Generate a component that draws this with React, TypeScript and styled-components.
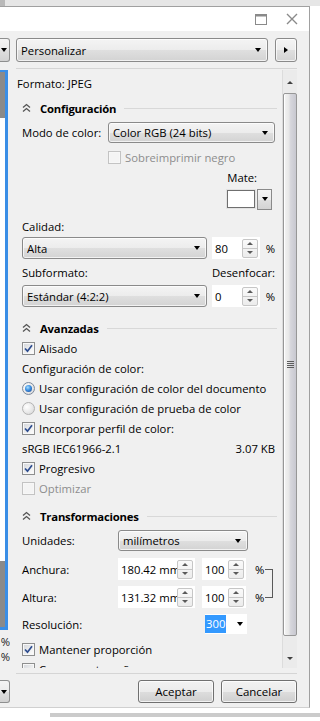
import React from "react";
import styled, { createGlobalStyle } from "styled-components";

const GlobalStyle = createGlobalStyle`
  html, body { margin: 0; padding: 0; background: #ffffff; }
  body {
    font-family: "Open Sans", "Noto Sans", "Liberation Sans", sans-serif;
    font-size: 11.3px;
    color: #000;
  }
  #root { width: 320px; height: 721px; overflow: hidden; }
  * { box-sizing: border-box; }
`;

const Screen = styled.div`
  width: 320px;
  height: 721px;
  overflow: hidden;
  display: flex;
  flex-direction: column;
  background: #fff;
`;

const TopStrip = styled.div`
  height: 6px;
  flex: none;
  background: #e6e6e6;
  display: flex;
`;

const TopCorner = styled.div`
  width: 5px;
  height: 6px;
  background: #b9b9b9;
`;

const Window = styled.div`
  width: 310px;
  height: 702px;
  flex: none;
  border-top: 1px solid #a0a0a0;
  border-right: 1px solid #a0a0a0;
  border-bottom: 1px solid #d0d0d0;
  background: #f0f0f0;
  display: flex;
  flex-direction: column;
`;

const BottomBar = styled.div`
  margin: 5px 0 0 50px;
  height: 4px;
  background: #cbcbcb;
`;

const TitleBar = styled.div`
  height: 24px;
  flex: none;
  background: #ffffff;
  display: flex;
  align-items: center;
  justify-content: flex-end;
  gap: 19px;
  padding-right: 11px;
`;

const Body = styled.div`
  flex: 1;
  min-height: 0;
  display: grid;
  grid-template-columns: 10px 1fr;
  column-gap: 6px;
  padding-right: 12px;
`;

/* ---------- left (cut) preview pane ---------- */
const LeftPane = styled.div`
  display: flex;
  flex-direction: column;
  padding-top: 7px;
  overflow: hidden;
`;

const Stub = styled.div<{ $h: number; $mt?: number }>`
  width: 10px;
  height: ${(p) => p.$h}px;
  margin-top: ${(p) => p.$mt ?? 0}px;
  border: 1px solid #8e8f8f;
  border-left: none;
  border-radius: 0 3px 3px 0;
  background: linear-gradient(#f4f4f4 0%, #ebebeb 50%, #dedede 51%, #d2d2d2 100%);
  display: flex;
  align-items: center;
  padding-left: 1px;
`;

const Preview = styled.div`
  width: 8px;
  height: 560px;
  margin-top: 8px;
  border-top: 2px solid #3a8ee6;
  border-right: 3px solid #3a8ee6;
  border-bottom: 3px solid #3a8ee6;
  display: flex;
  flex-direction: column;
  background: #ffffff;
`;

const PreviewShade = styled.div<{ $h: number }>`
  height: ${(p) => p.$h}px;
  background: #8a8a8a;
  flex: none;
`;

const PreviewFill = styled.div`
  flex: 1;
`;

const CutPercent = styled.div`
  margin-top: 4px;
  width: 10px;
  line-height: 15px;
  direction: rtl;
  overflow: hidden;
  white-space: nowrap;
  color: #222;
`;

/* ---------- main column ---------- */
const Main = styled.div`
  display: flex;
  flex-direction: column;
  min-width: 0;
`;

const Toolbar = styled.div`
  padding-top: 7px;
  display: flex;
  gap: 7px;
  height: 31px;
  flex: none;
`;

const Separator = styled.div<{ $mt: number }>`
  margin-top: ${(p) => p.$mt}px;
  height: 1px;
  flex: none;
  background: #d5d5d5;
`;

const Panel = styled.div`
  margin-top: 1px;
  height: 598px;
  flex: none;
  display: flex;
`;

const Content = styled.div`
  flex: 1;
  min-width: 0;
  overflow: hidden;
  display: flex;
  flex-direction: column;
  padding-right: 7px;
`;

const ButtonRow = styled.div`
  margin-top: 6px;
  display: flex;
  justify-content: flex-end;
  gap: 7px;
`;

const PushButton = styled.div`
  width: 76px;
  height: 23px;
  border: 1px solid #707070;
  border-radius: 3px;
  background: linear-gradient(#f2f2f2 0%, #ebebeb 50%, #dddddd 51%, #cfcfcf 100%);
  box-shadow: inset 0 0 0 1px rgba(255, 255, 255, 0.75);
  display: flex;
  align-items: center;
  justify-content: center;
  font-size: 11.5px;
`;

/* ---------- scrollbar ---------- */
const Scrollbar = styled.div`
  width: 15px;
  flex: none;
  padding-top: 2px;
  display: flex;
  flex-direction: column;
  background: #ebebeb;
  border-left: 1px solid #dcdcdc;
`;

const ScrollBtn = styled.div<{ $h: number }>`
  height: ${(p) => p.$h}px;
  flex: none;
  display: flex;
  align-items: center;
  justify-content: center;
`;

const ScrollTrack = styled.div`
  flex: 1;
  display: flex;
  flex-direction: column;
`;

const Thumb = styled.div`
  height: 543px;
  border: 1px solid #979797;
  border-radius: 2px;
  background: linear-gradient(to right, #f4f4f4 0%, #e8e8e8 40%, #d6d6dc 55%, #c8c8d0 100%);
  box-shadow: inset 1px 0 0 #ffffff;
  display: flex;
  align-items: center;
  justify-content: center;
`;

const Grip = styled.div`
  width: 7px;
  height: 7px;
  background: repeating-linear-gradient(#5d5d5d 0 1px, transparent 1px 2px);
`;

/* ---------- rows ---------- */
const FormatRow = styled.div`
  height: 28px;
  line-height: 28px;
  padding-left: 1px;
  flex: none;
`;

const SectionHeader = styled.div<{ $mt?: number }>`
  margin-top: ${(p) => p.$mt ?? 0}px;
  height: 20px;
  flex: none;
  display: flex;
  align-items: center;
  padding-left: 6px;
`;

const HeaderText = styled.span`
  margin-left: 9px;
  font-weight: 700;
  letter-spacing: -0.2px;
`;

const HeaderLine = styled.span`
  flex: 1;
  height: 1px;
  margin: 0 -2px 0 8px;
  background: #d8d8d8;
`;

const Row = styled.div<{ $mt?: number; $h?: number; $indent?: number; $justify?: string }>`
  margin-top: ${(p) => p.$mt ?? 0}px;
  height: ${(p) => p.$h ?? 20}px;
  flex: none;
  display: flex;
  align-items: center;
  justify-content: ${(p) => p.$justify ?? "flex-start"};
  padding-left: ${(p) => p.$indent ?? 6}px;
  white-space: nowrap;
`;

const Label = styled.span<{ $w?: number; $muted?: boolean; $mr?: number }>`
  width: ${(p) => (p.$w ? `${p.$w}px` : "auto")};
  margin-right: ${(p) => p.$mr ?? 0}px;
  flex: none;
  color: ${(p) => (p.$muted ? "#8d8d8d" : "#000")};
`;

const Spacer = styled.span<{ $w?: number }>`
  ${(p) => (p.$w ? `flex: none; width: ${p.$w}px;` : "flex: 1;")}
`;

const Combo = styled.div<{ $w?: number; $h?: number }>`
  ${(p) => (p.$w ? `width: ${p.$w}px; flex: none;` : "flex: 1;")}
  height: ${(p) => p.$h ?? 21}px;
  border: 1px solid #8a8a8a;
  border-radius: 3px;
  background: linear-gradient(#f4f4f4 0%, #ececec 50%, #dfdfdf 51%, #d3d3d3 100%);
  box-shadow: inset 0 0 0 1px rgba(255, 255, 255, 0.7);
  display: flex;
  align-items: center;
  padding: 0 6px 0 4px;
  min-width: 0;
`;

const ComboText = styled.span`
  flex: 1;
  overflow: hidden;
  white-space: nowrap;
`;

const DownArrow = styled.span`
  width: 0;
  height: 0;
  flex: none;
  border-left: 3.5px solid transparent;
  border-right: 3.5px solid transparent;
  border-top: 4px solid #000;
`;

const RightArrow = styled.span`
  width: 0;
  height: 0;
  border-top: 3.5px solid transparent;
  border-bottom: 3.5px solid transparent;
  border-left: 4px solid #000;
`;

const SmallArrow = styled.span<{ $up?: boolean; $color?: string }>`
  width: 0;
  height: 0;
  border-left: 3px solid transparent;
  border-right: 3px solid transparent;
  ${(p) =>
    p.$up
      ? `border-bottom: 3px solid ${p.$color ?? "#5a5a5a"};`
      : `border-top: 3px solid ${p.$color ?? "#5a5a5a"};`}
`;

const ArrowButton = styled.div`
  width: 22px;
  height: 24px;
  flex: none;
  border: 1px solid #8a8a8a;
  border-radius: 3px;
  background: linear-gradient(#f4f4f4 0%, #ececec 50%, #dfdfdf 51%, #d3d3d3 100%);
  box-shadow: inset 0 0 0 1px rgba(255, 255, 255, 0.7);
  display: flex;
  align-items: center;
  justify-content: center;
`;

const SpinBox = styled.div<{ $w: number }>`
  width: ${(p) => p.$w}px;
  height: 22px;
  flex: none;
  background: #ffffff;
  display: flex;
  align-items: center;
  padding-right: 2px;
`;

const SpinText = styled.span`
  flex: 1;
  min-width: 0;
  padding-left: 3px;
  overflow: hidden;
  white-space: nowrap;
`;

const SpinButtons = styled.span`
  width: 16px;
  height: 19px;
  flex: none;
  border: 1px solid #c6c6c6;
  border-radius: 2px;
  background: linear-gradient(#fafafa, #ececec);
  display: flex;
  flex-direction: column;
`;

const SpinHalf = styled.span`
  flex: 1;
  display: flex;
  align-items: center;
  justify-content: center;
  & + & {
    border-top: 1px solid #c6c6c6;
  }
`;

const Pct = styled.span`
  flex: 1;
  text-align: right;
`;

const Swatch = styled.div`
  display: flex;
  align-items: center;
  gap: 2px;
  margin-right: 3px;
`;

const SwatchColor = styled.div`
  width: 28px;
  height: 18px;
  background: #ffffff;
  border: 1px solid #6f6f6f;
  box-shadow: 0 0 0 1px #e2e2e2;
`;

const SwatchButton = styled.div`
  width: 15px;
  height: 21px;
  border: 1px solid #8a8a8a;
  background: linear-gradient(#f4f4f4 0%, #ececec 50%, #dfdfdf 51%, #d3d3d3 100%);
  display: flex;
  align-items: center;
  justify-content: center;
`;

const CheckBox = styled.span<{ $disabled?: boolean }>`
  width: 13px;
  height: 13px;
  flex: none;
  margin-right: 4px;
  border: 1px solid ${(p) => (p.$disabled ? "#c3c3c3" : "#8e8f8f")};
  background: ${(p) =>
    p.$disabled ? "#f4f4f4" : "linear-gradient(135deg, #d2d5da 0%, #f4f4f4 70%, #ffffff 100%)"};
  box-shadow: inset 0 0 0 1px ${(p) => (p.$disabled ? "#f7f7f7" : "#f8f8f8")};
  display: flex;
  align-items: center;
  justify-content: center;
`;

const RadioCircle = styled.span<{ $on?: boolean }>`
  width: 13px;
  height: 13px;
  flex: none;
  margin-right: 4px;
  border-radius: 50%;
  border: 1px solid ${(p) => (p.$on ? "#7d8a9c" : "#b3b3b3")};
  background: radial-gradient(circle at 35% 35%, #ffffff 0%, #e6e6e6 60%, #d0d0d0 100%);
  display: flex;
  align-items: center;
  justify-content: center;
  &::after {
    content: "";
    width: 7px;
    height: 7px;
    border-radius: 50%;
    background: ${(p) =>
      p.$on ? "radial-gradient(circle at 40% 35%, #a8e0ff 0%, #3b8ee0 45%, #173f8c 100%)" : "transparent"};
  }
`;

const TransformGrid = styled.div`
  margin-top: 7px;
  flex: none;
  display: grid;
  grid-template-columns: 96px 84px 53px 10px 8px;
  grid-template-rows: 22px 22px;
  row-gap: 6px;
  padding-left: 6px;
  align-items: center;
`;

const Bracket = styled.div`
  grid-column: 5;
  grid-row: 1 / 3;
  align-self: stretch;
  margin: 11px 0 10px 0;
  border: 1px solid #5a5a5a;
  border-left: none;
`;

const EditCombo = styled.div`
  width: 42px;
  height: 20px;
  flex: none;
  background: #ffffff;
  display: flex;
  align-items: center;
  padding-right: 4px;
`;

const Selected = styled.span`
  background: #3399ff;
  color: #ffffff;
  height: 18px;
  line-height: 18px;
  padding: 0 1px;
  margin-right: auto;
`;

/* ---------- icons ---------- */
const MaxIcon = () => (
  <svg width="12" height="11" viewBox="0 0 12 11">
    <rect x="0.5" y="0.5" width="11" height="10" fill="none" stroke="#8a8a8a" strokeWidth="1" />
    <rect x="0.5" y="0.5" width="11" height="2" fill="#8a8a8a" />
  </svg>
);

const CloseIcon = () => (
  <svg width="12" height="12" viewBox="0 0 12 12">
    <path d="M1 1 L11 11 M11 1 L1 11" stroke="#8a8a8a" strokeWidth="1.4" fill="none" />
  </svg>
);

const Chevrons = () => (
  <svg width="9" height="10" viewBox="0 0 9 10">
    <path d="M1 4.5 L4.5 1.5 L8 4.5 M1 8.5 L4.5 5.5 L8 8.5" stroke="#555" strokeWidth="1.3" fill="none" />
  </svg>
);

const Tick = () => (
  <svg width="9" height="9" viewBox="0 0 9 9">
    <path d="M1 4.5 L3.5 7.2 L8 1.2" stroke="#2e4d8f" strokeWidth="1.7" fill="none" />
  </svg>
);

const Check = ({ on, disabled, children }: { on?: boolean; disabled?: boolean; children: React.ReactNode }) => (
  <>
    <CheckBox $disabled={disabled}>{on && <Tick />}</CheckBox>
    <Label $muted={disabled}>{children}</Label>
  </>
);

const Spin = ({ w, value }: { w: number; value: string }) => (
  <SpinBox $w={w}>
    <SpinText>{value}</SpinText>
    <SpinButtons>
      <SpinHalf>
        <SmallArrow $up />
      </SpinHalf>
      <SpinHalf>
        <SmallArrow />
      </SpinHalf>
    </SpinButtons>
  </SpinBox>
);

export default function App() {
  return (
    <>
      <GlobalStyle />
      <Screen>
        <TopStrip>
          <TopCorner />
        </TopStrip>
        <Window>
          <TitleBar>
            <MaxIcon />
            <CloseIcon />
          </TitleBar>
          <Body>
            <LeftPane>
              <Stub $h={24}>
                <DownArrow />
              </Stub>
              <Preview>
                <PreviewShade $h={46} />
                <PreviewFill />
                <PreviewShade $h={66} />
              </Preview>
              <CutPercent>
                %<br />%
              </CutPercent>
              <Stub $h={23} $mt={16}>
                <DownArrow />
              </Stub>
            </LeftPane>

            <Main>
              <Toolbar>
                <Combo $h={24}>
                  <ComboText>Personalizar</ComboText>
                  <DownArrow />
                </Combo>
                <ArrowButton>
                  <RightArrow />
                </ArrowButton>
              </Toolbar>
              <Separator $mt={6} />
              <Panel>
                <Content>
                  <FormatRow>Formato: JPEG</FormatRow>

                  <SectionHeader>
                    <Chevrons />
                    <HeaderText>Configuración</HeaderText>
                    <HeaderLine />
                  </SectionHeader>
                  <Row $mt={4} $h={21}>
                    <Label $w={86}>Modo de color:</Label>
                    <Combo>
                      <ComboText>Color RGB (24 bits)</ComboText>
                      <DownArrow />
                    </Combo>
                  </Row>
                  <Row $mt={4} $indent={92}>
                    <Check disabled>Sobreimprimir negro</Check>
                  </Row>
                  <Row $justify="flex-end">
                    <Label $mr={18}>Mate:</Label>
                  </Row>
                  <Row $mt={1} $h={22} $justify="flex-end">
                    <Swatch>
                      <SwatchColor />
                      <SwatchButton>
                        <DownArrow />
                      </SwatchButton>
                    </Swatch>
                  </Row>
                  <Row $mt={6}>
                    <Label>Calidad:</Label>
                  </Row>
                  <Row $mt={1} $h={22}>
                    <Combo $w={185} $h={22}>
                      <ComboText>Alta</ComboText>
                      <DownArrow />
                    </Combo>
                    <Spacer $w={5} />
                    <Spin w={48} value="80" />
                    <Pct>%</Pct>
                  </Row>
                  <Row $mt={3}>
                    <Label>Subformato:</Label>
                    <Spacer />
                    <Label>Desenfocar:</Label>
                  </Row>
                  <Row $mt={3} $h={22}>
                    <Combo $w={185} $h={22}>
                      <ComboText>Estándar (4:2:2)</ComboText>
                      <DownArrow />
                    </Combo>
                    <Spacer $w={5} />
                    <Spin w={48} value="0" />
                    <Pct>%</Pct>
                  </Row>

                  <SectionHeader $mt={11}>
                    <Chevrons />
                    <HeaderText>Avanzadas</HeaderText>
                    <HeaderLine />
                  </SectionHeader>
                  <Row>
                    <Check on>Alisado</Check>
                  </Row>
                  <Row>
                    <Label>Configuración de color:</Label>
                  </Row>
                  <Row>
                    <RadioCircle $on />
                    <Label>Usar configuración de color del documento</Label>
                  </Row>
                  <Row>
                    <RadioCircle />
                    <Label>Usar configuración de prueba de color</Label>
                  </Row>
                  <Row>
                    <Check on>Incorporar perfil de color:</Check>
                  </Row>
                  <Row>
                    <Label>sRGB IEC61966-2.1</Label>
                    <Spacer />
                    <Label>3.07 KB</Label>
                  </Row>
                  <Row>
                    <Check on>Progresivo</Check>
                  </Row>
                  <Row>
                    <Check disabled>Optimizar</Check>
                  </Row>

                  <SectionHeader $mt={8}>
                    <Chevrons />
                    <HeaderText>Transformaciones</HeaderText>
                    <HeaderLine />
                  </SectionHeader>
                  <Row $mt={4} $h={21}>
                    <Label $w={96}>Unidades:</Label>
                    <Combo $w={130}>
                      <ComboText>milímetros</ComboText>
                      <DownArrow />
                    </Combo>
                  </Row>
                  <TransformGrid>
                    <Label>Anchura:</Label>
                    <Spin w={77} value="180.42 mm" />
                    <Spin w={44} value="100" />
                    <Label>%</Label>
                    <Bracket />
                    <Label>Altura:</Label>
                    <Spin w={77} value="131.32 mm" />
                    <Spin w={44} value="100" />
                    <Label>%</Label>
                  </TransformGrid>
                  <Row $mt={6}>
                    <Label $w={183}>Resolución:</Label>
                    <EditCombo>
                      <Selected>300</Selected>
                      <DownArrow />
                    </EditCombo>
                  </Row>
                  <Row $mt={5}>
                    <Check on>Mantener proporción</Check>
                  </Row>
                  <Row>
                    <Check>Conservar tamaño</Check>
                  </Row>
                </Content>
                <Scrollbar>
                  <ScrollBtn $h={21}>
                    <SmallArrow $up $color="#404040" />
                  </ScrollBtn>
                  <ScrollTrack>
                    <Thumb>
                      <Grip />
                    </Thumb>
                  </ScrollTrack>
                  <ScrollBtn $h={20}>
                    <SmallArrow $color="#404040" />
                  </ScrollBtn>
                </Scrollbar>
              </Panel>
              <Separator $mt={5} />
              <ButtonRow>
                <PushButton>Aceptar</PushButton>
                <PushButton>Cancelar</PushButton>
              </ButtonRow>
            </Main>
          </Body>
        </Window>
        <BottomBar />
      </Screen>
    </>
  );
}
